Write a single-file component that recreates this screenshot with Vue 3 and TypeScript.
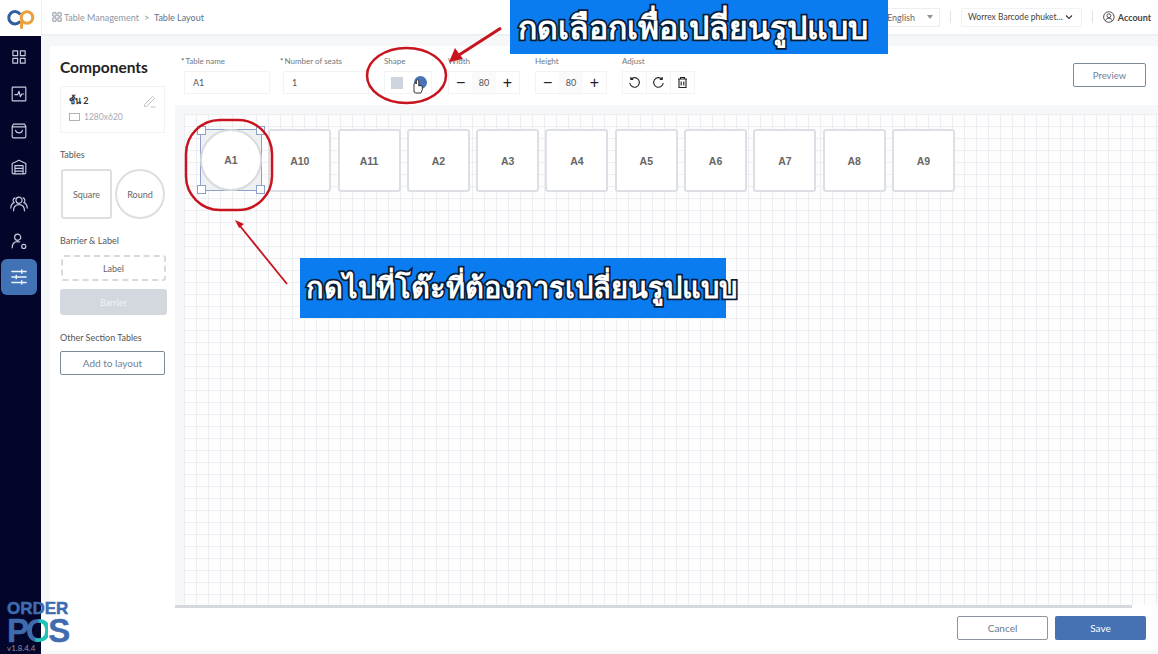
<script setup lang="ts">
const navIcons: string[] = [
  'M13 13h7v7h-7zM24 13h7v7h-7zM13 24h7v7h-7zM24 24h7v7h-7z',
  'M13 12h18a1 1 0 0 1 1 1v18a1 1 0 0 1-1 1H13a1 1 0 0 1-1-1V13a1 1 0 0 1 1-1zM16 23h4l2-5 2 8 2-4h3',
  'M14 12h16l2 3v15a2 2 0 0 1-2 2H14a2 2 0 0 1-2-2V15zM12 16h20M17 21c1 5 9 5 10 0',
  'M12 17l10-5 10 5v13a2 2 0 0 1-2 2H14a2 2 0 0 1-2-2zM16 20h12v12H16zM16 24h12M16 28h12',
  'M22 21a4.500 4.500 0 1 0 0-9 4.500 4.500 0 0 0 0 9zM14 32c0-6 3-9 8-9s8 3 8 9M16 13a4 4 0 0 0-1 7c-3 1-5 4-5 8M28 13a4 4 0 0 1 1 7c3 1 5 4 5 8',
  'M20 21a4.500 4.500 0 1 0 0-9 4.500 4.500 0 0 0 0 9zM12 32c0-6 3-9 8-9 1 0 2 0 3 .5M29 33a3 3 0 1 0 0-6 3 3 0 0 0 0 6z',
]
const tables: string[] = ['A10', 'A11', 'A2', 'A3', 'A4', 'A5', 'A6', 'A7', 'A8', 'A9']
</script>

<template>
  <div class="page">
    <aside class="rail">
      <div class="logo">
        <svg width="30" height="24" viewBox="0 0 30 24" fill="none">
          <path d="M13.500 7.500a6.200 6.200 0 1 0 0 8.500" stroke="#2f5f9e" stroke-width="3" stroke-linecap="round" />
          <circle cx="21" cy="11.500" r="5.800" stroke="#e9a13b" stroke-width="3" />
          <path d="M15.500 15v6.500" stroke="#e9a13b" stroke-width="3" stroke-linecap="round" />
        </svg>
      </div>
      <nav class="nav">
        <div v-for="(d, i) in navIcons" :key="i" class="nav-item">
          <svg width="30" height="30" viewBox="0 0 44 44" fill="none" stroke="#c5cede" stroke-width="1.700" stroke-linejoin="round" stroke-linecap="round"><path :d="d" /></svg>
        </div>
        <div class="nav-item active">
          <svg width="24" height="24" viewBox="0 0 44 44" fill="none" stroke="#eef3fa" stroke-width="2.600" stroke-linecap="round"><path d="M9 12h26M9 22h26M9 32h26M27 9v6M17 19v6M27 29v6" /></svg>
        </div>
      </nav>
      <div class="version">v1.8.4.4</div>
    </aside>

    <div class="main">
      <header class="top">
        <div class="crumbs">
          <svg width="10" height="10" viewBox="0 0 10 10" fill="none" stroke="#8b95a3" stroke-width="1"><path d="M.8.8h3.300v3.300H.8zM5.900.8h3.300v3.300H5.900zM.8 5.900h3.300v3.300H.8zM5.900 5.900h3.300v3.300H5.900z" /></svg>
          <span class="crumb-a">Table Management</span>
          <span class="crumb-sep">&gt;</span>
          <span class="crumb-b">Table Layout</span>
        </div>
        <div class="top-right">
          <div class="lang"><span>English</span><i class="caret"></i></div>
          <span class="vline"></span>
          <div class="store"><span>Worrex Barcode phuket...</span>
            <svg width="8" height="6" viewBox="0 0 8 6" fill="none" stroke="#333" stroke-width="1.100"><path d="M1 1.500l3 3 3-3" /></svg>
          </div>
          <span class="vline"></span>
          <div class="account">
            <svg width="14" height="14" viewBox="0 0 14 14" fill="none" stroke="#333" stroke-width="1"><circle cx="7" cy="7" r="6.300" /><circle cx="7" cy="5.500" r="2.300" /><path d="M2.800 11.500c.8-2 2.300-3 4.200-3s3.400 1 4.200 3" /></svg>
            <span>Account</span>
          </div>
        </div>
      </header>

      <div class="work">
        <section class="panel">
          <h2>Components</h2>
          <div class="floor">
            <div class="floor-head"><b>ชั้น 2</b>
              <svg width="13" height="13" viewBox="0 0 13 13" fill="none" stroke="#b4bac2" stroke-width=".9"><path d="M1.500 9.500L9.500 1.500l2 2-8 8H1.500zM8 12h4.500" /></svg>
            </div>
            <div class="floor-size">
              <svg width="11" height="8" viewBox="0 0 11 8" fill="none" stroke="#9aa2ac" stroke-width=".8"><rect x=".5" y=".5" width="10" height="7" /></svg>
              <span>1280x620</span>
            </div>
          </div>
          <div class="cap first">Tables</div>
          <div class="shapes">
            <div class="shape sq">Square</div>
            <div class="shape rd">Round</div>
          </div>
          <div class="cap second">Barrier &amp; Label</div>
          <div class="dash">Label</div>
          <div class="barrier">Barrier</div>
          <div class="cap third">Other Section Tables</div>
          <button class="add">Add to layout</button>
        </section>

        <section class="editor">
          <div class="tools">
            <div class="field f-name">
              <label><em>*</em>Table name</label>
              <div class="input">A1</div>
            </div>
            <div class="field f-seats">
              <label><em>*</em>Number of seats</label>
              <div class="input">1</div>
            </div>
            <div class="field f-shape">
              <label>Shape</label>
              <div class="group shape-pick"><i class="pick-sq"></i><i class="pick-rd"></i></div>
            </div>
            <div class="field f-step">
              <label>Width</label>
              <div class="group stepper"><span class="sym">−</span><span class="val">80</span><span class="sym">+</span></div>
            </div>
            <div class="field f-step">
              <label>Height</label>
              <div class="group stepper"><span class="sym">−</span><span class="val">80</span><span class="sym">+</span></div>
            </div>
            <div class="field f-adj">
              <label>Adjust</label>
              <div class="group adj">
                <span><svg width="13" height="13" viewBox="0 0 13 13" fill="none" stroke="#222" stroke-width="1.100"><path d="M3 3.200A4.800 4.800 0 1 1 1.800 7M2.800 1v2.400h2.400" /></svg></span>
                <span><svg width="13" height="13" viewBox="0 0 13 13" fill="none" stroke="#222" stroke-width="1.100"><path d="M10 3.200A4.800 4.800 0 1 0 11.200 7M10.200 1v2.400H7.800" /></svg></span>
                <span><svg width="13" height="13" viewBox="0 0 13 13" fill="none" stroke="#222" stroke-width="1.100"><path d="M2 3h9M4.500 3V1.500h4V3M3 3v8.500h7V3M5.200 5.500v4M7.800 5.500v4" /></svg></span>
              </div>
            </div>
            <button class="preview">Preview</button>
          </div>
          <div class="canvas-wrap">
            <div class="canvas">
              <div class="selected">
                <div class="circle">A1</div>
                <i class="h tl"></i><i class="h tr"></i><i class="h bl"></i><i class="h br"></i>
              </div>
              <div v-for="t in tables" :key="t" class="table">{{ t }}</div>
            </div>
            <div class="scroll"></div>
          </div>
        </section>
      </div>

      <footer class="foot">
        <button class="cancel">Cancel</button>
        <button class="save">Save</button>
      </footer>
    </div>

    <div class="brand">
      <div class="b-order">ORDER</div>
      <div class="b-pos">P<span>O</span>S</div>
    </div>

    <svg class="marks" width="1158" height="654" viewBox="0 0 1158 654" fill="none">
      <ellipse cx="406.500" cy="75.500" rx="39.500" ry="27.500" stroke="#c8141e" stroke-width="2.500" />
      <rect x="186" y="120" width="86" height="90" rx="34" stroke="#c8141e" stroke-width="2.500" />
      <path d="M501 28L459 55" stroke="#c8141e" stroke-width="3" />
      <path d="M449 62l6-14 8 11z" fill="#c8141e" />
      <path d="M287 284L240 226" stroke="#c8141e" stroke-width="1.800" />
      <path d="M235 220l9 4-5 4z" fill="#c8141e" />
      <path d="M414 92v-8c0-1.500 2.300-1.500 2.300 0v-3c0-1.800 2.500-1.800 2.500 0v5c1.500-1 3.500-.5 3.500 1v3l-1.500 3h-5z" fill="#fff" stroke="#222" stroke-width=".9" />
    </svg>

    <div class="note note-a">กดเลือกเพื่อเปลี่ยนรูปแบบ</div>
    <div class="note note-b">กดไปที่โต๊ะที่ต้องการเปลี่ยนรูปแบบ</div>
  </div>
</template>

<style>
html, body { margin: 0; background: #fff; }
</style>

<style scoped>
.page { position: relative; display: flex; width: 1158px; height: 654px; overflow: hidden; background: #f5f7f9; font-family: Lato, "Noto Sans", sans-serif; color: #444; }
.rail { width: 41px; flex: none; background: #03052b; display: flex; flex-direction: column; position: relative; }
.logo { height: 36px; background: #fff; display: flex; align-items: center; justify-content: center; }
.nav { display: flex; flex-direction: column; align-items: flex-start; padding: 3px 0 0 1px; }
.nav-item { width: 36px; height: 36.700px; display: flex; align-items: center; justify-content: center; border-radius: 6px; }
.nav-item.active { background: #4272b6; height: 36px; }
.version { position: absolute; left: 7px; top: 643px; font-size: 8px; line-height: 10px; color: #8d93a6; }
.main { flex: 1; min-width: 0; display: flex; flex-direction: column; }
.top { height: 36px; flex: none; background: #fff; border-bottom: 2px solid #eef1f4; box-sizing: border-box; display: flex; align-items: center; justify-content: space-between; padding: 0 7px 0 10px; border-left: 1px solid #f0f2f4; }
.crumbs { display: flex; align-items: center; gap: 2px; font-size: 9px; }
.crumb-a { color: #8e97a3; }
.crumb-sep { color: #8e97a3; margin: 0 3px; }
.crumb-b { color: #5a7290; }
.top-right { display: flex; align-items: center; font-size: 9px; color: #444; }
.lang { width: 70px; height: 19px; box-sizing: border-box; border: 1px solid #eceff2; display: flex; align-items: center; justify-content: space-between; padding: 0 6px 0 16px; color: #666; }
.caret { width: 0; height: 0; border: 3.500px solid transparent; border-top: 4px solid #8a94a0; border-bottom: 0; }
.vline { width: 1px; height: 12px; background: #dfe3e7; margin: 0 10px; }
.store { width: 121px; height: 19px; box-sizing: border-box; border: 1px solid #f0f2f4; display: flex; align-items: center; justify-content: space-between; padding: 0 8px 0 6px; white-space: nowrap; font-size: 8.500px; }
.account { width: 48px; display: flex; align-items: center; gap: 3px; font-weight: 700; color: #444; white-space: nowrap; }
.work { flex: 1; min-height: 0; display: flex; padding: 10px 0 0 9px; }
.panel { width: 125px; flex: none; box-sizing: border-box; background: #fff; padding: 11px 8px 0 10px; display: flex; flex-direction: column; align-items: flex-start; }
h2 { margin: 0; font-size: 15.500px; line-height: 20px; font-weight: 700; color: #222; }
.floor { width: 105px; height: 47px; box-sizing: border-box; margin-top: 9px; border: 1px solid #f1f3f5; padding: 7px 8px; }
.floor-head { display: flex; align-items: center; justify-content: space-between; font-size: 9px; color: #333; }
.floor-size { display: flex; align-items: center; gap: 4px; margin-top: 4px; font-size: 8.500px; color: #a4abb4; }
.cap { font-size: 9px; line-height: 12px; color: #555; }
.cap.first { margin-top: 16px; }
.shapes { display: flex; gap: 3px; margin: 8px 0 0 1px; }
.shape { width: 50px; height: 50px; box-sizing: border-box; background: #fff; border: 2px solid #dcdfe2; display: flex; align-items: center; justify-content: center; font-size: 9px; color: #666; }
.shape.sq { border-radius: 3px; width: 51px; }
.shape.rd { border-radius: 50%; }
.cap.second { margin-top: 16px; }
.dash { width: 105px; height: 26px; box-sizing: border-box; margin: 8px 0 0 1px; border: 2px dashed #d6d9dd; border-radius: 3px; display: flex; align-items: center; justify-content: center; font-size: 9px; color: #666; }
.barrier { width: 107px; height: 26px; margin-top: 8px; border-radius: 3px; background: #d3d8df; color: #f0f2f5; display: flex; align-items: center; justify-content: center; font-size: 9px; }
.cap.third { margin-top: 17px; }
.add { width: 105px; height: 24px; margin-top: 7px; box-sizing: border-box; background: #fff; border: 1px solid #7d8a97; border-radius: 2px; font: inherit; font-size: 10px; color: #6f8096; padding: 0; }
.editor { flex: 1; min-width: 0; display: flex; flex-direction: column; }
.tools { height: 59px; flex: none; box-sizing: border-box; background: #fff; display: flex; align-items: flex-start; padding: 10px 12px 0 6px; position: relative; }
.field { display: flex; flex-direction: column; }
.field label { font-size: 8px; line-height: 10px; color: #707780; height: 15px; }
.field label em { font-style: normal; color: #555; margin-right: 1px; }
.input { height: 23px; box-sizing: border-box; border: 1px solid #f1f3f5; margin-left: 3px; padding-left: 8px; display: flex; align-items: center; font-size: 9px; color: #555; }
.f-name { width: 99px; }
.f-name .input { width: 86px; }
.f-seats { width: 104px; }
.f-seats .input { width: 86px; }
.f-shape { width: 64px; }
.f-step { width: 87px; }
.f-adj { width: 78px; }
.group { height: 23px; box-sizing: border-box; border: 1px solid #f1f3f5; display: flex; align-items: center; }
.shape-pick { width: 48px; padding-left: 6px; gap: 11px; }
.pick-sq { width: 12px; height: 12px; background: #cfd5dc; }
.pick-rd { width: 13px; height: 13px; border-radius: 50%; background: #4a72b4; }
.stepper { width: 72px; }
.sym { width: 24px; height: 100%; display: flex; align-items: center; justify-content: center; font-size: 16px; color: #222; font-family: "Liberation Sans", sans-serif; }
.val { width: 24px; height: 100%; display: flex; align-items: center; justify-content: center; font-size: 9px; color: #555; background: #fafafa; }
.adj { width: 73px; }
.adj span { width: 24px; height: 100%; display: flex; align-items: center; justify-content: center; border-right: 1px solid #f1f3f5; }
.adj span:last-child { border-right: 0; }
.preview { position: absolute; right: 12px; top: 17px; width: 73px; height: 24px; background: #fff; border: 1px solid #7d8a97; border-radius: 2px; font: inherit; font-size: 9.500px; color: #6f8096; padding: 0; }
.canvas-wrap { flex: 1; min-height: 0; position: relative; padding: 9px 0 0 9px; }
.canvas { height: 491px; background-color: #fdfdfe; background-image: linear-gradient(#eceef2 1px, transparent 1px), linear-gradient(90deg, #eceef2 1px, transparent 1px); background-size: 12px 12px; display: flex; align-items: flex-start; gap: 6.300px; padding: 15px 0 0 16px; box-sizing: border-box; }
.selected { width: 62px; height: 62px; box-sizing: border-box; border: 1.500px solid #8ea2c9; position: relative; background: #eef0f2; }
.circle { position: absolute; inset: -1px; border-radius: 50%; background: #fff; border: 2px solid #d8dadd; display: flex; align-items: center; justify-content: center; font: 700 10.500px "Liberation Sans", sans-serif; color: #666; }
.h { position: absolute; width: 7px; height: 7px; background: #fff; border: 1px solid #8ea2c9; }
.tl { left: -4px; top: -4px; }
.tr { right: -4px; top: -4px; }
.bl { left: -4px; bottom: -4px; }
.br { right: -4px; bottom: -4px; }
.table { width: 63px; height: 63px; flex: none; box-sizing: border-box; background: #fff; border: 2px solid #dcdfe5; border-radius: 3px; display: flex; align-items: center; justify-content: center; font: 700 10.500px "Liberation Sans", sans-serif; color: #666; }
.scroll { height: 3px; width: 957px; margin-left: -9px; background: #d5d9df; }
.foot { height: 45px; flex: none; margin-bottom: 4px; background: #fff; display: flex; align-items: center; justify-content: flex-end; gap: 7px; padding-right: 12px; }
.cancel, .save { width: 91px; height: 24px; border-radius: 2px; font: inherit; font-size: 10px; padding: 0; }
.cancel { background: #fff; border: 1px solid #8d96a0; color: #6d7784; }
.save { background: #4672b4; border: 0; color: #fff; }
.brand { position: absolute; left: 7px; top: 601px; font-family: "Liberation Sans", sans-serif; font-weight: 700; color: #3f6cae; line-height: 1; }
.b-order { font-size: 17px; line-height: 16px; -webkit-text-stroke: .5px #3f6cae; }
.b-pos { font-size: 33px; line-height: 28px; letter-spacing: -3.200px; -webkit-text-stroke: .4px #3f6cae; }
.b-pos span { background: linear-gradient(100deg, #3f6cae 45%, #21c4b4 55%); -webkit-background-clip: text; background-clip: text; -webkit-text-fill-color: transparent; -webkit-text-stroke: 0; }
.marks { position: absolute; left: 0; top: 0; pointer-events: none; }
.note { position: absolute; background: #0a7cf0; color: #fff; display: flex; align-items: center; font-family: "Noto Sans", "Liberation Sans", sans-serif; font-weight: 600; -webkit-text-stroke: 3.500px #041c38; paint-order: stroke fill; white-space: nowrap; box-sizing: border-box; }
.note-a { left: 510px; top: 0; width: 378px; height: 54px; font-size: 32px; padding-left: 8px; }
.note-b { left: 300px; top: 258px; width: 426px; height: 60px; font-size: 29px; padding-left: 6px; }
</style>
